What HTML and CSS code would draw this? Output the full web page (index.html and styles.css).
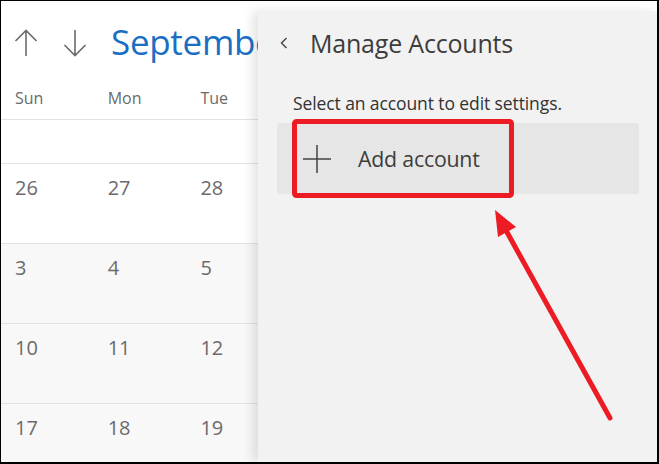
FILE: index.html
```html
<!DOCTYPE html>
<html>
<head>
<meta charset="utf-8">
<link rel="stylesheet" href="styles.css">
</head>
<body>
<div class="frame">
  <div class="calendar">
    <div class="cal-top">
      <svg class="nav-arrow" width="24" height="28" viewBox="0 0 24 28"><path d="M12 1.5V27M1.5 12L12 1.5L22.5 12" fill="none" stroke="#6b6b6b" stroke-width="1.6"/></svg>
      <svg class="nav-arrow down" width="24" height="28" viewBox="0 0 24 28"><path d="M12 1V26.5M1.5 16L12 26.5L22.5 16" fill="none" stroke="#6b6b6b" stroke-width="1.6"/></svg>
      <span class="month">September</span>
    </div>
    <div class="cal-row days">
      <div class="cell">Sun</div><div class="cell">Mon</div><div class="cell">Tue</div>
    </div>
    <div class="cal-row week short">
      <div class="cell"></div><div class="cell"></div><div class="cell"></div>
    </div>
    <div class="cal-row week">
      <div class="cell">26</div><div class="cell">27</div><div class="cell">28</div>
    </div>
    <div class="cal-row week alt">
      <div class="cell">3</div><div class="cell">4</div><div class="cell">5</div>
    </div>
    <div class="cal-row week alt">
      <div class="cell">10</div><div class="cell">11</div><div class="cell">12</div>
    </div>
    <div class="cal-row week alt">
      <div class="cell">17</div><div class="cell">18</div><div class="cell">19</div>
    </div>
  </div>

  <div class="panel">
    <div class="panel-head">
      <svg class="chevron" width="8" height="12" viewBox="0 0 8 12"><path d="M6.5 1L1.5 6L6.5 11" fill="none" stroke="#444" stroke-width="1.4"/></svg>
      <span class="panel-title">Manage Accounts</span>
    </div>
    <p class="hint">Select an account to edit settings.</p>
    <div class="add-row">
      <svg class="plus" width="28" height="28" viewBox="0 0 28 28"><path d="M14 0V28M0 14H28" fill="none" stroke="#444" stroke-width="1.5"/></svg>
      <span class="add-label">Add account</span>
    </div>
  </div>

  <svg class="annotation" width="657" height="462" viewBox="0 0 657 462">
    <rect x="293.5" y="120.5" width="217" height="74" rx="2" fill="none" stroke="#ed1c24" stroke-width="5"/>
    <line x1="609" y1="417" x2="502" y2="224" stroke="#ed1c24" stroke-width="5" stroke-linecap="round"/>
    <polygon points="494,209 497,236 515,226" fill="#ed1c24"/>
  </svg>
</div>
</body>
</html>
```

FILE: styles.css
```css
* { box-sizing: border-box; }
html, body { margin: 0; padding: 0; background: #fff; }
body { font-family: "Open Sans", "Noto Sans", "DejaVu Sans", sans-serif; }

.frame {
  position: relative;
  width: 659px;
  height: 464px;
  border-top: 1px solid #000;
  border-left: 1px solid #000;
  border-right: 2px solid #000;
  border-bottom: 2px solid #000;
  overflow: hidden;
  background: #fff;
}

.calendar { width: 656px; }

.cal-top {
  display: flex;
  align-items: center;
  height: 82px;
  padding-left: 13px;
  padding-top: 1px;
}
.nav-arrow { flex: none; }
.nav-arrow.down { margin-left: 25px; }
.month {
  margin-left: 24px;
  font-size: 35px;
  color: #1a6fc4;
  white-space: nowrap;
  letter-spacing: -0.3px;
  line-height: 1;
  padding-bottom: 2px;
}

.cal-row {
  display: grid;
  grid-template-columns: repeat(7, 92.7px);
}
.cal-row .cell { padding-left: 14px; color: #6b6b6b; }

.days { height: 37px; border-bottom: 1px solid #e3e3e3; }
.days .cell { font-size: 16px; line-height: 30px; }

.week { height: 80px; border-bottom: 1px solid #e3e3e3; }
.week.short { height: 44px; }
.week.alt { background: #f8f8f8; }
.week .cell { font-size: 20px; line-height: 1; padding-top: 14px; }

.panel {
  position: absolute;
  left: 257px;
  top: 10px;
  right: 0;
  bottom: 0;
  background: #f2f2f2;
  box-shadow: -6px 0 10px rgba(0,0,0,0.10);
  padding: 0 18px 0 19px;
}
.panel-head {
  display: flex;
  align-items: center;
  height: 64px;
  padding-left: 3px;
}
.chevron { flex: none; }
.panel-title {
  margin-left: 22px;
  font-size: 25px;
  color: #3d3d3d;
  letter-spacing: -0.2px;
}
.hint {
  margin: 19px 0 0 16px;
  font-size: 17.5px;
  line-height: 18px;
  color: #333;
  letter-spacing: -0.1px;
}
.add-row {
  display: flex;
  align-items: center;
  height: 71px;
  margin-top: 11px;
  background: #e6e6e6;
  border-radius: 2px;
  padding-left: 26px;
}
.plus { flex: none; }
.add-label {
  margin-left: 27px;
  font-size: 21.3px;
  color: #3d3d3d;
  letter-spacing: -0.2px;
}

.annotation {
  position: absolute;
  left: 0;
  top: 0;
  pointer-events: none;
}
```
